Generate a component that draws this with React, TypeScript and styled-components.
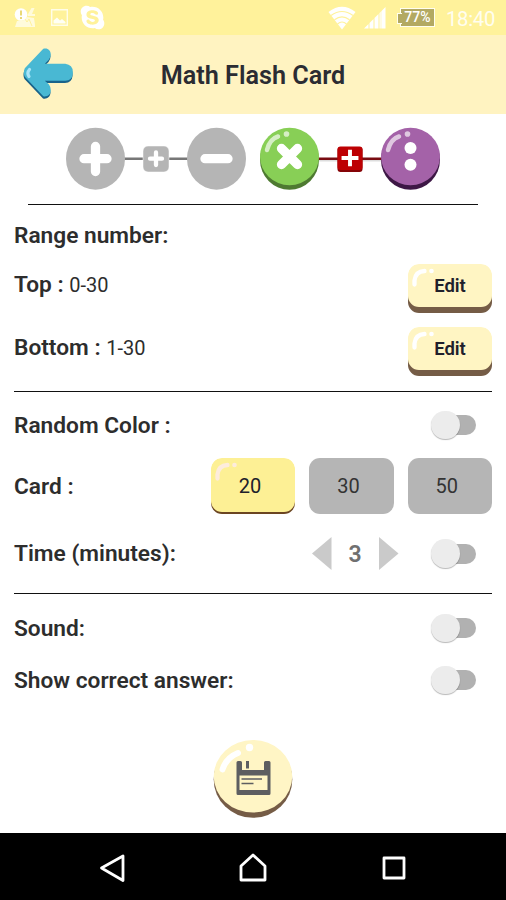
import React from "react";
import styled, { createGlobalStyle } from "styled-components";
import { FaSkype } from "react-icons/fa";

const GlobalStyle = createGlobalStyle`
  * { box-sizing: border-box; }
  body { margin: 0; background: #fff; font-family: Roboto, "Liberation Sans", sans-serif; }
  button { font-family: inherit; border: 0; padding: 0; background: none; }
  svg { display: block; flex: none; }
`;

const Screen = styled.div`
  width: 506px;
  height: 900px;
  display: flex;
  flex-direction: column;
  overflow: hidden;
  background: #fff;
`;

const StatusBar = styled.div`
  height: 35px;
  flex: none;
  display: flex;
  align-items: center;
  justify-content: space-between;
  background: #fff29b;
  color: #fffef0;
  padding: 0 11px 0 14px;
`;

const StatusGroup = styled.div`
  display: flex;
  align-items: center;
`;

const SkypeIcon = styled(FaSkype)`
  width: 25px;
  height: 27px;
  margin-left: 12.5px;
  color: #fff;
`;

const Battery = styled.div`
  position: relative;
  width: 35px;
  height: 19px;
  margin-left: 14px;
  border: 1px solid #fffef0;
  background: #b3a962;
  color: #fff;
  font-size: 14px;
  font-weight: 500;
  line-height: 17px;
  text-align: center;

  &::before {
    content: "";
    position: absolute;
    left: -4px;
    top: 4px;
    width: 4px;
    height: 9px;
    border: 1px solid #fffef0;
    border-right: 0;
    background: #b3a962;
  }
`;

const Clock = styled.div`
  margin-left: 11px;
  font-size: 20.3px;
  line-height: 24px;
  letter-spacing: -0.3px;
  padding-top: 2px;
`;

const Header = styled.header`
  height: 79px;
  flex: none;
  display: grid;
  grid-template-columns: 80px 1fr 80px;
  align-items: center;
  background: #fff3c1;
`;

const BackButton = styled.button`
  margin: -1px 0 0 22px;
  width: 52px;
  height: 52px;
`;

const Title = styled.h1`
  margin: 1px 0 0;
  text-align: center;
  font-size: 25.2px;
  font-weight: 600;
  color: #2b2c33;
  white-space: nowrap;
`;

const Main = styled.main`
  flex: 1;
  display: flex;
  flex-direction: column;
  padding: 0 14px;
`;

const Operations = styled.div`
  height: 90px;
  display: flex;
  justify-content: center;
  gap: 14px;
  padding-top: 13px;
`;

const Divider = styled.hr<{ $inset?: boolean }>`
  width: ${(p) => (p.$inset ? "450px" : "100%")};
  height: 1px;
  flex: none;
  margin: 0 auto;
  border: 0;
  background: #111;
`;

const Row = styled.div<{ $height: number }>`
  height: ${(p) => p.$height}px;
  flex: none;
  display: flex;
  align-items: center;
`;

const RangeList = styled.div`
  display: flex;
  flex-direction: column;
  gap: 14px;
  padding-bottom: 15px;
`;

const Label = styled.span<{ $shift?: number }>`
  flex: 1;
  margin-top: ${(p) => p.$shift ?? 1}px;
  font-size: 22.7px;
  line-height: 28px;
  font-weight: 600;
  color: #2d2d2d;
  white-space: nowrap;
`;

const RangeValue = styled.span`
  font-size: 20px;
  font-weight: 400;
`;

const EditButton = styled.button`
  display: flex;
  flex-direction: column;
  width: 84px;
  height: 49px;
  border-radius: 11px;
  background: linear-gradient(transparent 50%, #755c46 50%);
  color: #20202b;
  font-size: 18.5px;
  font-weight: 600;
  line-height: 44px;
  overflow: hidden;
`;

const Face = styled.span<{ $height: number; $color: string }>`
  display: block;
  position: relative;
  width: 100%;
  height: ${(p) => p.$height}px;
  border-radius: 11px;
  background: ${(p) => p.$color};
`;

const Shine = styled.svg`
  position: absolute;
  left: 3px;
  top: 2px;
`;

const CardOptions = styled.div`
  display: flex;
  gap: 14px;
`;

const CardButton = styled.button<{ $selected?: boolean }>`
  display: flex;
  flex-direction: column;
  align-items: center;
  width: 84.4px;
  height: 56px;
  border-radius: 11px;
  overflow: hidden;
  background: ${(p) => (p.$selected ? "linear-gradient(transparent 50%, #6b4522 50%)" : "#b5b5b5")};
  color: ${(p) => (p.$selected ? "#20202b" : "#333")};
  font-size: 20px;
  line-height: 57px;
`;

const Count = styled.span`
  display: block;
  padding-right: 6px;
`;

const Stepper = styled.div`
  display: flex;
  align-items: center;
  margin-right: 32px;
`;

const StepValue = styled.span`
  width: 47px;
  padding-top: 1px;
  text-align: center;
  font-size: 23px;
  font-weight: 600;
  color: #707070;
`;

const Switch = styled.button`
  width: 46px;
  height: 30px;
  margin-right: 15.5px;
  display: flex;
  align-items: center;
`;

const Track = styled.span`
  width: 35.5px;
  height: 20px;
  margin-left: 10px;
  border-radius: 10px;
  background: #b1b1b1;
  display: flex;
  align-items: center;
`;

const Thumb = styled.span`
  width: 28.5px;
  height: 28.5px;
  flex: none;
  margin-left: -9.5px;
  border-radius: 50%;
  background: #ececec;
  box-shadow: 0 1px 1px 0 rgba(0, 0, 0, 0.28);
`;

const SaveArea = styled.div`
  flex: 1;
  display: flex;
  justify-content: center;
  align-items: flex-start;
  padding-top: 41px;
`;

const NavBar = styled.nav`
  height: 67px;
  flex: none;
  display: grid;
  grid-template-columns: 1fr 56px 1fr;
  align-items: center;
  justify-items: center;
  padding-top: 3px;
  background: #000;
`;

const NavIcon = styled.svg`
  width: 30px;
  height: 30px;
  fill: none;
  stroke: #fff;
  stroke-width: 2.8;
  stroke-linejoin: round;
`;

function Toggle() {
  return (
    <Switch role="switch" aria-checked="false">
      <Track>
        <Thumb />
      </Track>
    </Switch>
  );
}

function Gloss({ color }: { color: string }) {
  return (
    <Shine width="26" height="24" fill="none" stroke={color} strokeWidth="4.300" strokeLinecap="round">
      <path d="M3.500 18.500V14.500Q4.500 5.500 13.500 5" />
      <circle cx="20.500" cy="5" r="2.300" fill={color} stroke="none" />
    </Shine>
  );
}

function DisabledPair() {
  return (
    <svg width="180" height="63" viewBox="0 0 180 63">
      <rect x="56" y="30.500" width="68" height="2.500" fill="#777" />
      <ellipse cx="29.500" cy="31.700" rx="29.500" ry="31" fill="#b5b5b5" />
      <ellipse cx="150.500" cy="31.700" rx="29.500" ry="31" fill="#b5b5b5" />
      <rect x="77" y="19" width="26" height="26" rx="5" fill="#b5b5b5" stroke="#fff" strokeWidth=".5" />
      <g fill="none" stroke="#fff" strokeLinecap="round">
        <path d="M18 31.700h23M29.500 19.500v25M139 31.700h23" strokeWidth="9.300" />
        <path d="M84 31.700h12M90 25.500v12.500" strokeWidth="4.300" />
      </g>
    </svg>
  );
}

function CoinShine({ x }: { x: number }) {
  return (
    <g opacity=".65">
      <path d={`M${x + 7} 23C${x + 9} 15 ${x + 13} 11 ${x + 18} 9.500`} fill="none" stroke="#fff" strokeWidth="4.500" strokeLinecap="round" />
      <circle cx={x + 26.5} cy="7" r="2.800" fill="#fff" />
    </g>
  );
}

function ActivePair() {
  return (
    <svg width="180" height="63" viewBox="0 0 180 63">
      <rect x="56" y="33" width="68" height="1.500" fill="#ddd" />
      <rect x="56" y="30.500" width="68" height="2.500" fill="#790c12" />
      <ellipse cx="29.500" cy="32.700" rx="29.500" ry="30" fill="#4e7a31" />
      <ellipse cx="29.500" cy="29.500" rx="29.500" ry="28.800" fill="#88cf56" />
      <ellipse cx="150.500" cy="32.700" rx="29.500" ry="30" fill="#3d1745" />
      <ellipse cx="150.500" cy="29.500" rx="29.500" ry="28.800" fill="#a462a8" />
      <rect x="77.500" y="20" width="25" height="25" rx="3" fill="#850407" />
      <rect x="77.500" y="19.500" width="25" height="23.500" rx="3" fill="#bd0003" />
      <path d="M83.500 31h13M90 24.700v12.600" stroke="#fff" strokeWidth="3.900" strokeLinecap="square" fill="none" />
      <path d="M21.500 21.500 37.500 37.500M37.500 21.500 21.500 37.500" stroke="#fff" strokeWidth="9.300" strokeLinecap="round" fill="none" />
      <circle cx="150.500" cy="21" r="6" fill="#fff" />
      <circle cx="150.500" cy="37.700" r="6" fill="#fff" />
      <CoinShine x={0} />
      <CoinShine x={121} />
    </svg>
  );
}

function BackArrow() {
  const arrow =
    "M21 1.500C25 0 28.500 3 28.500 7Q28.500 10 26.500 12.500L22.500 16.500H43Q50.500 17.500 50.500 24.500V26.500Q50 33 43 33.500H22.500L26.500 37Q28.500 39.500 28.500 43C28.500 47.500 24.500 50 21 49L2.500 29.500Q.5 25.500 2.500 21Z";
  return (
    <svg width="52" height="52" viewBox="0 0 52 52">
      <path d={arrow} transform="translate(0 1.500)" fill="#19638a" />
      <path d={arrow} transform="translate(.3 -.7)" fill="#49b8d3" />
      <path d="M7.500 21.500Q4.500 25 7 28.500" fill="none" stroke="#a9e4f8" strokeWidth="3.200" strokeLinecap="round" />
    </svg>
  );
}

function SaveIcon() {
  return (
    <svg width="80" height="80" viewBox="0 0 80 80">
      <ellipse cx="40" cy="40.500" rx="39.300" ry="38.300" fill="#755c46" />
      <ellipse cx="40" cy="37.300" rx="39.300" ry="36.300" fill="#fff5c5" />
      <path d="M9.500 30.500Q13 19 25 14" fill="none" stroke="#fff" strokeWidth="6" strokeLinecap="round" />
      <circle cx="36.500" cy="8.500" r="3.700" fill="#fff" />
      <path d="M25 22h2.500q1.500 0 1.500 1.500V31h22v-7.500q0-1.500 1.500-1.500H56q1.500 0 1.500 1.500v31q0 1.500-1.500 1.500H25q-1.500 0-1.500-1.500v-31q0-1.500 1.500-1.500Z" fill="#5d5e61" />
      <path d="M33 22h3v7.500h-3z" fill="#5d5e61" />
      <path d="M26.500 36.500h28V51h-28z" fill="#fff5c5" />
      <path d="M28.500 40h20.500M28.500 44.500h12" stroke="#5d5e61" strokeWidth="1.300" fill="none" />
    </svg>
  );
}

function CleanerIcon() {
  return (
    <svg width="22" height="22" viewBox="0 0 22 22">
      <path d="M13.500 8 17.500 1h3L18 7h3v2h-7zM3 14l-2 6h20V18l-1-7-7-1-4 4z" fill="#fffbdc" />
      <path d="m11 12 2 3 2-3 3 7" fill="none" stroke="#fff29b" />
      <circle cx="7" cy="7.500" r="6.300" fill="#fff" />
      <path d="M7 3.500v5M7 10v2" stroke="#e9d878" strokeWidth="2" />
    </svg>
  );
}

function PictureIcon() {
  return (
    <svg width="17" height="17" viewBox="0 0 17 17">
      <path d="M.7.700h15.600v15.600H.7z" fill="none" stroke="#fffde9" strokeWidth="1.400" />
      <path d="M2.500 14.500v-3l3.500-3 3 3 2-1.500 3.500 3v1.500z" fill="#fffff5" />
    </svg>
  );
}

const StatusPicture = styled.span`
  margin-left: 14.5px;
`;

const SignalGroup = styled.span`
  display: flex;
  align-items: center;
  gap: 8px;
  padding-top: 1px;
`;

const ranges = [
  { name: "Top :", value: "0-30" },
  { name: "Bottom :", value: "1-30" },
];

export default function App() {
  return (
    <Screen>
      <GlobalStyle />
      <StatusBar>
        <StatusGroup>
          <CleanerIcon />
          <StatusPicture>
            <PictureIcon />
          </StatusPicture>
          <SkypeIcon />
        </StatusGroup>
        <StatusGroup>
          <SignalGroup>
            <svg width="28" height="24" viewBox="0 0 28 24">
              <path d="M.5 6Q14-4.500 27.500 6L14 23.500Z" fill="#fff" />
              <path d="M3 9.500Q14 1.500 25 9.500M6.500 13.700Q14 8 21.500 13.700M9.500 18Q14 14 18.500 18" fill="none" stroke="#fff29b" strokeWidth="1.100" />
            </svg>
            <svg width="22" height="22" viewBox="0 0 22 22">
              <path d="M0 21.500 4.500 17V21.500ZM5.500 16 9.500 12V21.500H5.500ZM10.500 11 14.500 7V21.500H10.500ZM15.500 6 21.500 0V21.500H15.500Z" fill="#fff" />
              <path d="M17 0v22" stroke="#fff29b" strokeWidth=".5" />
            </svg>
          </SignalGroup>
          <Battery>77%</Battery>
          <Clock>18:40</Clock>
        </StatusGroup>
      </StatusBar>

      <Header>
        <BackButton aria-label="Back">
          <BackArrow />
        </BackButton>
        <Title>Math Flash Card</Title>
      </Header>

      <Main>
        <Operations>
          <DisabledPair />
          <ActivePair />
        </Operations>
        <Divider $inset />

        <Row $height={59}>
          <Label $shift={3}>Range number:</Label>
        </Row>
        <RangeList>
          {ranges.map((r) => (
            <Row key={r.name} $height={49}>
              <Label $shift={-7}>
                {r.name} <RangeValue>{r.value}</RangeValue>
              </Label>
              <EditButton>
                <Face $height={42.5} $color="#fff5c3">
                  <Gloss color="#fff" />
                  Edit
                </Face>
              </EditButton>
            </Row>
          ))}
        </RangeList>
        <Divider />

        <Row $height={66}>
          <Label>Random Color :</Label>
          <Toggle />
        </Row>
        <Row $height={56}>
          <Label>Card :</Label>
          <CardOptions>
            <CardButton $selected>
              <Face $height={53.5} $color="#fdf095">
                <Gloss color="#fdecdc" />
                <Count>20</Count>
              </Face>
            </CardButton>
            <CardButton>
              <Count>30</Count>
            </CardButton>
            <CardButton>
              <Count>50</Count>
            </CardButton>
          </CardOptions>
        </Row>
        <Row $height={79}>
          <Label>Time (minutes):</Label>
          <Stepper>
            <svg width="20" height="33" viewBox="0 0 20 33">
              <path d="M0 16.500 19.500 0V33Z" fill="#cacaca" />
            </svg>
            <StepValue>3</StepValue>
            <svg width="20" height="33" viewBox="0 0 20 33">
              <path d="M19.500 16.500 0 0V33Z" fill="#cacaca" />
            </svg>
          </Stepper>
          <Toggle />
        </Row>
        <Divider />

        <Row $height={68}>
          <Label>Sound:</Label>
          <Toggle />
        </Row>
        <Row $height={36}>
          <Label>Show correct answer:</Label>
          <Toggle />
        </Row>
        <SaveArea>
          <button aria-label="Save">
            <SaveIcon />
          </button>
        </SaveArea>
      </Main>

      <NavBar>
        <NavIcon viewBox="0 0 30 30">
          <path d="M3.500 15 25 3V27.500Z" />
        </NavIcon>
        <NavIcon viewBox="0 0 30 30">
          <path d="M3 13 15 2 27 13V27H3Z" />
        </NavIcon>
        <NavIcon viewBox="0 0 30 30">
          <path d="M5 5H25V25H5Z" />
        </NavIcon>
      </NavBar>
    </Screen>
  );
}
